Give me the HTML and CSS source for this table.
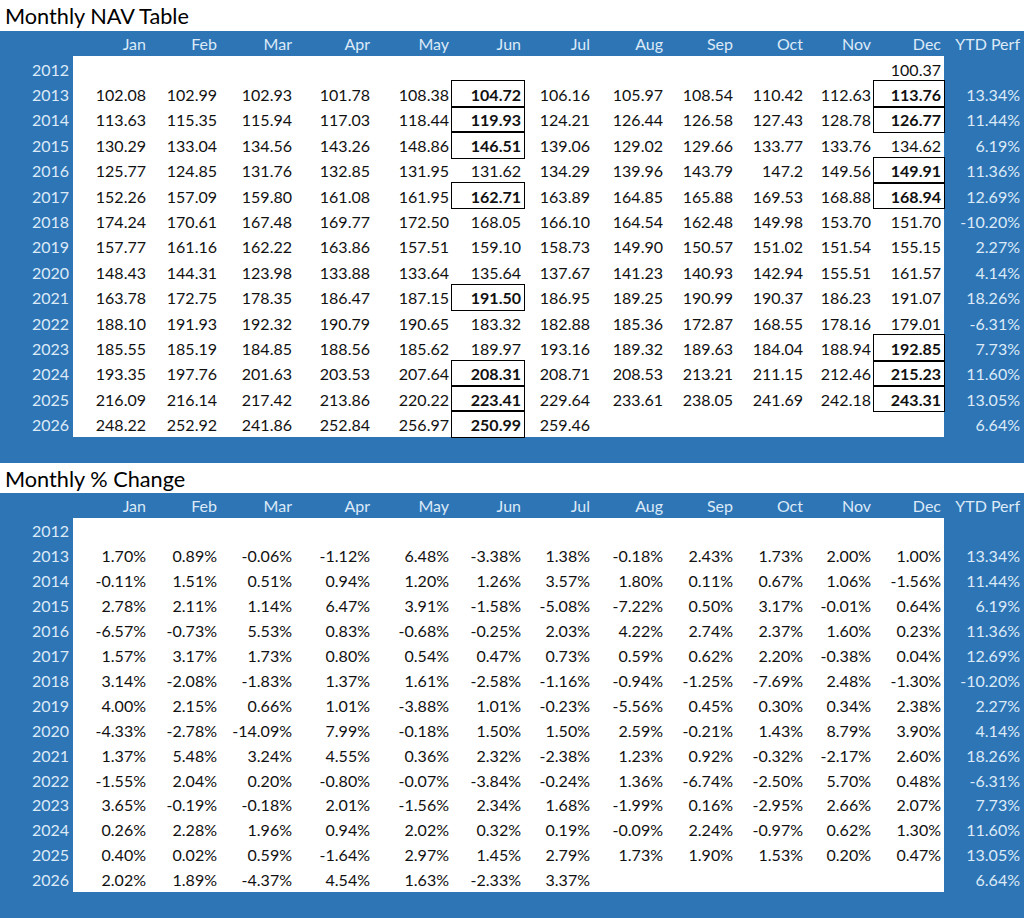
FILE: index.html
```html
<!DOCTYPE html>
<html>
<head>
<meta charset="utf-8">
<title>Monthly NAV Table</title>
<link rel="stylesheet" href="styles.css">
</head>
<body>
<h2 class="title">Monthly NAV Table</h2>
<table class="grid nav">
<colgroup>
<col class="w73"><col class="w76"><col class="w71"><col class="w75"><col class="w78"><col class="w79"><col class="w72"><col class="w69"><col class="w73"><col class="w70"><col class="w70"><col class="w68"><col class="w70"><col class="w80">
</colgroup>
<thead>
<tr><th></th><th>Jan</th><th>Feb</th><th>Mar</th><th>Apr</th><th>May</th><th>Jun</th><th>Jul</th><th>Aug</th><th>Sep</th><th>Oct</th><th>Nov</th><th>Dec</th><th>YTD Perf</th></tr>
</thead>
<tbody>
<tr><th>2012</th><td></td><td></td><td></td><td></td><td></td><td></td><td></td><td></td><td></td><td></td><td></td><td>100.37</td><th></th></tr>
<tr><th>2013</th><td>102.08</td><td>102.99</td><td>102.93</td><td>101.78</td><td>108.38</td><td class="box">104.72</td><td>106.16</td><td>105.97</td><td>108.54</td><td>110.42</td><td>112.63</td><td class="box">113.76</td><th>13.34%</th></tr>
<tr><th>2014</th><td>113.63</td><td>115.35</td><td>115.94</td><td>117.03</td><td>118.44</td><td class="box">119.93</td><td>124.21</td><td>126.44</td><td>126.58</td><td>127.43</td><td>128.78</td><td class="box">126.77</td><th>11.44%</th></tr>
<tr><th>2015</th><td>130.29</td><td>133.04</td><td>134.56</td><td>143.26</td><td>148.86</td><td class="box">146.51</td><td>139.06</td><td>129.02</td><td>129.66</td><td>133.77</td><td>133.76</td><td>134.62</td><th>6.19%</th></tr>
<tr><th>2016</th><td>125.77</td><td>124.85</td><td>131.76</td><td>132.85</td><td>131.95</td><td>131.62</td><td>134.29</td><td>139.96</td><td>143.79</td><td>147.2</td><td>149.56</td><td class="box">149.91</td><th>11.36%</th></tr>
<tr><th>2017</th><td>152.26</td><td>157.09</td><td>159.80</td><td>161.08</td><td>161.95</td><td class="box">162.71</td><td>163.89</td><td>164.85</td><td>165.88</td><td>169.53</td><td>168.88</td><td class="box">168.94</td><th>12.69%</th></tr>
<tr><th>2018</th><td>174.24</td><td>170.61</td><td>167.48</td><td>169.77</td><td>172.50</td><td>168.05</td><td>166.10</td><td>164.54</td><td>162.48</td><td>149.98</td><td>153.70</td><td>151.70</td><th>-10.20%</th></tr>
<tr><th>2019</th><td>157.77</td><td>161.16</td><td>162.22</td><td>163.86</td><td>157.51</td><td>159.10</td><td>158.73</td><td>149.90</td><td>150.57</td><td>151.02</td><td>151.54</td><td>155.15</td><th>2.27%</th></tr>
<tr><th>2020</th><td>148.43</td><td>144.31</td><td>123.98</td><td>133.88</td><td>133.64</td><td>135.64</td><td>137.67</td><td>141.23</td><td>140.93</td><td>142.94</td><td>155.51</td><td>161.57</td><th>4.14%</th></tr>
<tr><th>2021</th><td>163.78</td><td>172.75</td><td>178.35</td><td>186.47</td><td>187.15</td><td class="box">191.50</td><td>186.95</td><td>189.25</td><td>190.99</td><td>190.37</td><td>186.23</td><td>191.07</td><th>18.26%</th></tr>
<tr><th>2022</th><td>188.10</td><td>191.93</td><td>192.32</td><td>190.79</td><td>190.65</td><td>183.32</td><td>182.88</td><td>185.36</td><td>172.87</td><td>168.55</td><td>178.16</td><td>179.01</td><th>-6.31%</th></tr>
<tr><th>2023</th><td>185.55</td><td>185.19</td><td>184.85</td><td>188.56</td><td>185.62</td><td>189.97</td><td>193.16</td><td>189.32</td><td>189.63</td><td>184.04</td><td>188.94</td><td class="box">192.85</td><th>7.73%</th></tr>
<tr><th>2024</th><td>193.35</td><td>197.76</td><td>201.63</td><td>203.53</td><td>207.64</td><td class="box">208.31</td><td>208.71</td><td>208.53</td><td>213.21</td><td>211.15</td><td>212.46</td><td class="box">215.23</td><th>11.60%</th></tr>
<tr><th>2025</th><td>216.09</td><td>216.14</td><td>217.42</td><td>213.86</td><td>220.22</td><td class="box">223.41</td><td>229.64</td><td>233.61</td><td>238.05</td><td>241.69</td><td>242.18</td><td class="box">243.31</td><th>13.05%</th></tr>
<tr><th>2026</th><td>248.22</td><td>252.92</td><td>241.86</td><td>252.84</td><td>256.97</td><td class="box">250.99</td><td>259.46</td><td></td><td></td><td></td><td></td><td></td><th>6.64%</th></tr>
</tbody>
<tfoot>
<tr><th colspan="14"></th></tr>
</tfoot>
</table>

<h2 class="title second">Monthly % Change</h2>
<table class="grid pct">
<colgroup>
<col class="w73"><col class="w76"><col class="w71"><col class="w75"><col class="w78"><col class="w79"><col class="w72"><col class="w69"><col class="w73"><col class="w70"><col class="w70"><col class="w68"><col class="w70"><col class="w80">
</colgroup>
<thead>
<tr><th></th><th>Jan</th><th>Feb</th><th>Mar</th><th>Apr</th><th>May</th><th>Jun</th><th>Jul</th><th>Aug</th><th>Sep</th><th>Oct</th><th>Nov</th><th>Dec</th><th>YTD Perf</th></tr>
</thead>
<tbody>
<tr><th>2012</th><td></td><td></td><td></td><td></td><td></td><td></td><td></td><td></td><td></td><td></td><td></td><td></td><th></th></tr>
<tr><th>2013</th><td>1.70%</td><td>0.89%</td><td>-0.06%</td><td>-1.12%</td><td>6.48%</td><td>-3.38%</td><td>1.38%</td><td>-0.18%</td><td>2.43%</td><td>1.73%</td><td>2.00%</td><td>1.00%</td><th>13.34%</th></tr>
<tr><th>2014</th><td>-0.11%</td><td>1.51%</td><td>0.51%</td><td>0.94%</td><td>1.20%</td><td>1.26%</td><td>3.57%</td><td>1.80%</td><td>0.11%</td><td>0.67%</td><td>1.06%</td><td>-1.56%</td><th>11.44%</th></tr>
<tr><th>2015</th><td>2.78%</td><td>2.11%</td><td>1.14%</td><td>6.47%</td><td>3.91%</td><td>-1.58%</td><td>-5.08%</td><td>-7.22%</td><td>0.50%</td><td>3.17%</td><td>-0.01%</td><td>0.64%</td><th>6.19%</th></tr>
<tr><th>2016</th><td>-6.57%</td><td>-0.73%</td><td>5.53%</td><td>0.83%</td><td>-0.68%</td><td>-0.25%</td><td>2.03%</td><td>4.22%</td><td>2.74%</td><td>2.37%</td><td>1.60%</td><td>0.23%</td><th>11.36%</th></tr>
<tr><th>2017</th><td>1.57%</td><td>3.17%</td><td>1.73%</td><td>0.80%</td><td>0.54%</td><td>0.47%</td><td>0.73%</td><td>0.59%</td><td>0.62%</td><td>2.20%</td><td>-0.38%</td><td>0.04%</td><th>12.69%</th></tr>
<tr><th>2018</th><td>3.14%</td><td>-2.08%</td><td>-1.83%</td><td>1.37%</td><td>1.61%</td><td>-2.58%</td><td>-1.16%</td><td>-0.94%</td><td>-1.25%</td><td>-7.69%</td><td>2.48%</td><td>-1.30%</td><th>-10.20%</th></tr>
<tr><th>2019</th><td>4.00%</td><td>2.15%</td><td>0.66%</td><td>1.01%</td><td>-3.88%</td><td>1.01%</td><td>-0.23%</td><td>-5.56%</td><td>0.45%</td><td>0.30%</td><td>0.34%</td><td>2.38%</td><th>2.27%</th></tr>
<tr><th>2020</th><td>-4.33%</td><td>-2.78%</td><td>-14.09%</td><td>7.99%</td><td>-0.18%</td><td>1.50%</td><td>1.50%</td><td>2.59%</td><td>-0.21%</td><td>1.43%</td><td>8.79%</td><td>3.90%</td><th>4.14%</th></tr>
<tr><th>2021</th><td>1.37%</td><td>5.48%</td><td>3.24%</td><td>4.55%</td><td>0.36%</td><td>2.32%</td><td>-2.38%</td><td>1.23%</td><td>0.92%</td><td>-0.32%</td><td>-2.17%</td><td>2.60%</td><th>18.26%</th></tr>
<tr><th>2022</th><td>-1.55%</td><td>2.04%</td><td>0.20%</td><td>-0.80%</td><td>-0.07%</td><td>-3.84%</td><td>-0.24%</td><td>1.36%</td><td>-6.74%</td><td>-2.50%</td><td>5.70%</td><td>0.48%</td><th>-6.31%</th></tr>
<tr><th>2023</th><td>3.65%</td><td>-0.19%</td><td>-0.18%</td><td>2.01%</td><td>-1.56%</td><td>2.34%</td><td>1.68%</td><td>-1.99%</td><td>0.16%</td><td>-2.95%</td><td>2.66%</td><td>2.07%</td><th>7.73%</th></tr>
<tr><th>2024</th><td>0.26%</td><td>2.28%</td><td>1.96%</td><td>0.94%</td><td>2.02%</td><td>0.32%</td><td>0.19%</td><td>-0.09%</td><td>2.24%</td><td>-0.97%</td><td>0.62%</td><td>1.30%</td><th>11.60%</th></tr>
<tr><th>2025</th><td>0.40%</td><td>0.02%</td><td>0.59%</td><td>-1.64%</td><td>2.97%</td><td>1.45%</td><td>2.79%</td><td>1.73%</td><td>1.90%</td><td>1.53%</td><td>0.20%</td><td>0.47%</td><th>13.05%</th></tr>
<tr><th>2026</th><td>2.02%</td><td>1.89%</td><td>-4.37%</td><td>4.54%</td><td>1.63%</td><td>-2.33%</td><td>3.37%</td><td></td><td></td><td></td><td></td><td></td><th>6.64%</th></tr>
</tbody>
<tfoot>
<tr><th colspan="14"></th></tr>
</tfoot>
</table>
</body>
</html>
```

FILE: styles.css
```css
html, body {
  margin: 0;
  padding: 0;
  background: #ffffff;
}

body {
  width: 1024px;
  font-family: Lato, "Open Sans", sans-serif;
  color: #000;
}

.title {
  margin: 0;
  height: 31px;
  padding-left: 5px;
  font-size: 21.7px;
  font-weight: 400;
  line-height: 33px;
  color: #000;
}

.title.second {
  height: 30px;
  line-height: 33px;
  overflow: visible;
}

.grid {
  width: 1024px;
  table-layout: fixed;
  border-collapse: collapse;
  border-spacing: 0;
  background: #2e75b6;
  font-size: 16px;
}

.w73 { width: 73px; }
.w76 { width: 76px; }
.w71 { width: 71px; }
.w75 { width: 75px; }
.w78 { width: 78px; }
.w79 { width: 79px; }
.w72 { width: 72px; }
.w69 { width: 69px; }
.w70 { width: 70px; }
.w68 { width: 68px; }
.w80 { width: 80px; }

.grid th,
.grid td {
  padding: 1px 3px 0 0;
  text-align: right;
  white-space: nowrap;
  overflow: visible;
}

.grid th {
  font-weight: 400;
  color: #dceaf7;
}

.grid tbody th:first-child,
.grid tbody th:last-child {
  padding-right: 4px;
}

.grid thead tr {
  height: 25px;
}

.grid thead th {
  padding-top: 0;
}

.grid thead th:last-child {
  padding-right: 4px;
}

.grid td {
  background: #ffffff;
  color: #111;
}

.nav tbody tr {
  height: 25.4px;
}

.pct tbody tr {
  height: 24.93px;
}

.grid tfoot tr {
  height: 26px;
}

.grid tfoot th {
  padding: 0;
}

.grid td.box {
  font-weight: 700;
  outline: 1.5px solid #000;
  outline-offset: -0.75px;
}
```
